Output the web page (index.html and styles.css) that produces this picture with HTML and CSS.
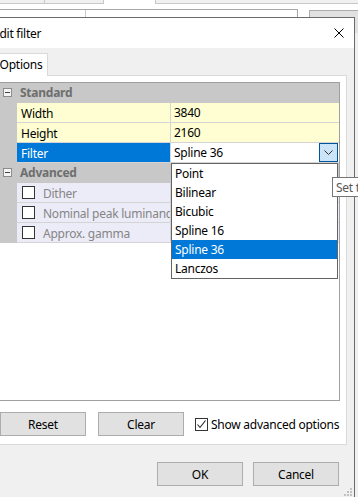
FILE: index.html
```
<!DOCTYPE html>
<html>
<head>
<meta charset="utf-8">
<link rel="stylesheet" href="styles.css">
</head>
<body>
<div class="app">
  <div class="app-tabs">
    <div class="apptab t1"></div>
    <div class="apptab t2"></div>
    <div class="app-gap"></div>
    <div class="apptab t3"></div>
  </div>
  <div class="app-main">
    <div class="app-box">
      <div class="app-cell c1"></div>
      <div class="app-cell c2"></div>
    </div>
    <div class="app-side">
      <div class="app-btn"></div>
    </div>
  </div>
</div>

<div class="dialog">
  <div class="titlebar">
    <span class="title">Edit filter</span>
    <svg class="close" width="10" height="10" viewBox="0 0 10 10"><path d="M0.5 0.5 L9.5 9.5 M9.5 0.5 L0.5 9.5" stroke="#000" stroke-width="1" fill="none"/></svg>
  </div>
  <div class="client">
    <div class="tabs"><div class="tab">Options</div></div>
    <div class="panel">
      <div class="grid">
        <div class="row cat">
          <div class="margin"><span class="toggle"></span></div>
          <div class="cat-label">Standard</div>
        </div>
        <div class="row prop">
          <div class="margin"></div>
          <div class="label">Width</div>
          <div class="value">3840</div>
        </div>
        <div class="row prop">
          <div class="margin"></div>
          <div class="label">Height</div>
          <div class="value">2160</div>
        </div>
        <div class="row prop sel">
          <div class="margin"></div>
          <div class="label">Filter</div>
          <div class="value combo">
            <span class="combo-text">Spline 36</span>
            <span class="combo-btn"><svg width="9" height="5" viewBox="0 0 9 5"><path d="M0.5 0.5 L4.5 4.5 L8.5 0.5" stroke="#333" stroke-width="1" fill="none"/></svg></span>
          </div>
        </div>
        <div class="row cat">
          <div class="margin"><span class="toggle"></span></div>
          <div class="cat-label">Advanced</div>
        </div>
        <div class="row prop adv">
          <div class="margin"></div>
          <div class="label"><span class="cb"></span><span class="adv-text">Dither</span></div>
          <div class="value"></div>
        </div>
        <div class="row prop adv">
          <div class="margin"></div>
          <div class="label"><span class="cb"></span><span class="adv-text">Nominal peak luminance</span></div>
          <div class="value"></div>
        </div>
        <div class="row prop adv">
          <div class="margin"></div>
          <div class="label"><span class="cb"></span><span class="adv-text">Approx. gamma</span></div>
          <div class="value"></div>
        </div>
        <ul class="dropdown">
          <li>Point</li>
          <li>Bilinear</li>
          <li>Bicubic</li>
          <li>Spline 16</li>
          <li class="hl">Spline 36</li>
          <li>Lanczos</li>
        </ul>
      </div>
      <div class="actions">
        <div class="btn reset">Reset</div>
        <div class="btn">Clear</div>
        <label class="check">
          <span class="cb checked"><svg width="11" height="11" viewBox="0 0 11 11"><path d="M1.5 5.5 L4 8.5 L9.5 1.5" stroke="#222" stroke-width="1.1" fill="none"/></svg></span>
          <span>Show advanced options</span>
        </label>
      </div>
    </div>
    <div class="footer">
      <div class="btn">OK</div>
      <div class="btn">Cancel</div>
    </div>
  </div>
  <svg class="grip" width="8" height="8" viewBox="0 0 8 8">
    <rect x="6" y="0" width="2" height="2" fill="#c2c2c2"/>
    <rect x="3" y="3" width="2" height="2" fill="#c2c2c2"/>
    <rect x="6" y="3" width="2" height="2" fill="#c2c2c2"/>
    <rect x="0" y="6" width="2" height="2" fill="#c2c2c2"/>
    <rect x="3" y="6" width="2" height="2" fill="#c2c2c2"/>
    <rect x="6" y="6" width="2" height="2" fill="#c2c2c2"/>
  </svg>
</div>

<div class="tooltip">Set the filter</div>
</body>
</html>
```
FILE: styles.css
```
html, body {
  margin: 0;
  padding: 0;
}
body {
  width: 358px;
  height: 497px;
  overflow: hidden;
  position: relative;
  background: #fff;
  font-family: "Noto Sans", "Open Sans", sans-serif;
  font-size: 12px;
  letter-spacing: -0.25px;
  color: #000;
}

/* background application */
.app {
  display: flex;
  flex-direction: column;
  height: 497px;
}
.app-tabs {
  display: flex;
  height: 4px;
}
.apptab {
  box-sizing: border-box;
  height: 4px;
  background: #f0f0f0;
  border-bottom: 1px solid #c8c8c8;
  border-right: 1px solid #c8c8c8;
}
.t1 { width: 45px; }
.t2 { width: 59px; }
.app-gap { width: 51px; }
.t3 { flex: 1; border-left: 1px solid #c8c8c8; border-right: none; }
.app-main {
  flex: 1;
  display: flex;
  margin-top: 5px;
}
.app-box {
  width: 298px;
  box-sizing: border-box;
  border-top: 1px solid #a8a8a8;
  border-right: 1px solid #a8a8a8;
  display: flex;
}
.app-cell.c1 {
  width: 85px;
  border-right: 1px solid #c8c8c8;
}
.app-side {
  flex: 1;
  margin-left: 11px;
  margin-top: 1px;
  background: #f0f0f0;
}
.app-btn {
  height: 22px;
  background: #e1e1e1;
  border-top: 1px solid #adadad;
  border-left: 1px solid #adadad;
}

/* dialog */
.dialog {
  position: absolute;
  top: 17px;
  left: -20px;
  width: 375px;
  height: 482px;
  box-sizing: border-box;
  border: 1px solid #6b6b6b;
  background: #f0f0f0;
  display: flex;
  flex-direction: column;
}
.titlebar {
  height: 30px;
  flex: none;
  background: #fff;
  display: flex;
  align-items: center;
  justify-content: space-between;
  padding: 0 10px 0 12px;
}
.title {
  font-size: 12px;
  padding-top: 1px;
}
.close {
  display: block;
}
.client {
  flex: 1;
  display: flex;
  flex-direction: column;
  padding: 5px 7px 0 11px;
}
.tabs {
  display: flex;
  padding-left: 2px;
}
.tab {
  position: relative;
  z-index: 1;
  width: 54px;
  height: 23px;
  box-sizing: border-box;
  margin-bottom: -1px;
  background: #fff;
  border: 1px solid #d9d9d9;
  border-bottom: none;
  display: flex;
  align-items: center;
  justify-content: center;
  padding-bottom: 1px;
}
.panel {
  background: #fff;
  border: 1px solid #d9d9d9;
  padding: 6px 6px 8px 6px;
}

/* property grid */
.grid {
  position: relative;
  height: 319px;
  box-sizing: border-box;
  border: 1px solid #a0a0a0;
  background: #fff;
}
.row {
  display: flex;
  height: 20px;
  box-sizing: border-box;
}
.margin {
  width: 17px;
  flex: none;
  background: #c8c8c8;
  position: relative;
}
.cat {
  background: #c8c8c8;
}
.toggle {
  position: absolute;
  left: 3px;
  top: 5px;
  width: 9px;
  height: 9px;
  box-sizing: border-box;
  border: 1px solid #8c8c8c;
  background: #f4f4f4;
}
.toggle::after {
  content: "";
  position: absolute;
  left: 1px;
  top: 3px;
  width: 5px;
  height: 1px;
  background: #444;
}
.cat-label {
  padding-left: 3px;
  font-weight: bold;
  color: #6e6e6e;
  line-height: 20px;
}
.prop .label {
  width: 154px;
  flex: none;
  box-sizing: border-box;
  padding-left: 4px;
  padding-top: 1px;
  background: #fefed2;
  border-right: 1px solid #d4d4d4;
  border-bottom: 1px solid #d4d4d4;
  white-space: nowrap;
  overflow: hidden;
  display: flex;
  align-items: center;
}
.prop .value {
  flex: 1;
  padding-left: 3px;
  line-height: 20px;
  background: #fefed2;
  border-bottom: 1px solid #d4d4d4;
}
.sel .label {
  background: #0078d7;
  color: #fff;
}
.sel .value {
  background: #fff;
}
.combo {
  display: flex;
  justify-content: space-between;
  padding-right: 1px;
}
.combo-btn {
  width: 19px;
  height: 19px;
  box-sizing: border-box;
  background: #cce4f7;
  border: 1px solid #005499;
  display: flex;
  align-items: center;
  justify-content: center;
}
.combo-btn svg {
  display: block;
}
.adv .label,
.adv .value {
  background: #ececf8;
}
.adv .label {
  padding-left: 5px;
  padding-top: 0;
}
.adv-text {
  color: #858585;
  margin-left: 8px;
  padding-top: 1px;
}
.cb {
  width: 13px;
  height: 13px;
  flex: none;
  box-sizing: border-box;
  border: 1px solid #333;
  background: #fff;
  display: inline-flex;
  align-items: center;
  justify-content: center;
}

/* dropdown */
.dropdown {
  position: absolute;
  left: 171px;
  top: 80px;
  width: 167px;
  margin: 0;
  padding: 0;
  list-style: none;
  box-sizing: border-box;
  border: 1px solid #646464;
  background: #fff;
  z-index: 2;
}
.dropdown li {
  height: 19px;
  line-height: 20px;
  padding-left: 3px;
}
.dropdown li.hl {
  background: #0078d7;
  color: #fff;
}

/* actions */
.actions {
  display: flex;
  align-items: center;
  margin-top: 11px;
}
.btn {
  width: 86px;
  height: 24px;
  box-sizing: border-box;
  background: #e1e1e1;
  border: 1px solid #adadad;
  display: flex;
  align-items: center;
  justify-content: center;
  padding-top: 1px;
}
.reset {
  margin-left: 1px;
  margin-right: 12px;
}
.check {
  display: flex;
  align-items: center;
  margin-left: 11px;
  white-space: nowrap;
}
.check .cb {
  margin-right: 3px;
}
.footer {
  display: flex;
  justify-content: flex-end;
  gap: 10px;
  margin-top: 17px;
  margin-right: 8px;
}

.grip {
  position: absolute;
  right: 2px;
  bottom: 2px;
}

.tooltip {
  position: absolute;
  left: 332px;
  top: 177px;
  height: 20px;
  box-sizing: border-box;
  padding: 0 3px;
  border: 1px solid #767676;
  background: #fff;
  color: #575757;
  line-height: 19px;
  white-space: nowrap;
  z-index: 5;
}
```
